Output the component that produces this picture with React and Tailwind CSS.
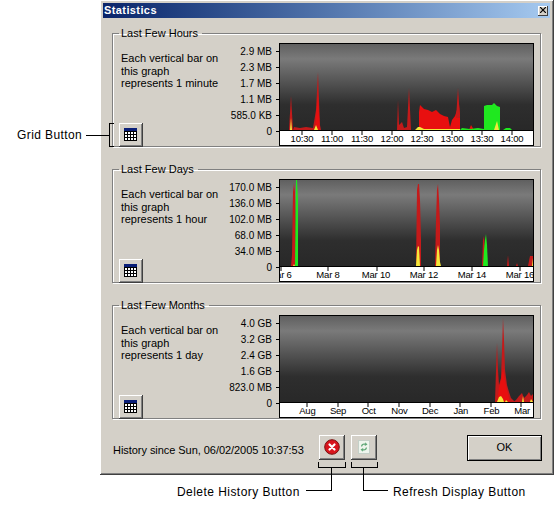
const RED = "#e80f0f";
const DARK = "#c41a1a";
const GREEN = "#1fe81f";
const YEL = "#f4e83a";

function Shapes({ shapes }) {
  return shapes.map(([c, pts], i) => <polygon key={i} fill={c} points={pts} />);
}

function Plot({ id, top, shapes }) {
  return (
    <svg className="block w-[253px] h-[86px]" viewBox={`280 ${top + 1} 253 86`}>
      <defs>
        <linearGradient id={id} x1="0" y1="0" x2="0" y2="1">
          <stop offset="0" stopColor="#5e5e5e" />
          <stop offset="0.18" stopColor="#7a7a7a" />
          <stop offset="0.7" stopColor="#2e2e2e" />
          <stop offset="1" stopColor="#282828" />
        </linearGradient>
      </defs>
      <rect x="280" y={top} width="254" height="88" fill={`url(#${id})`} />
      <Shapes shapes={shapes} />
    </svg>
  );
}

function XAxis({ ticks, labels, cell, offset }) {
  return (
    <div className="relative h-[14px] overflow-hidden bg-white border-t border-black">
      <svg className="absolute left-0 top-0 w-[253px] h-[4px]" viewBox="280 0 253 4">
        {ticks.map((t) => (
          <line key={t} x1={t} x2={t} y1="0" y2="4" stroke="#000" strokeWidth="1" />
        ))}
      </svg>
      <div className="flex pt-[2px] leading-[12px] text-[9.5px] tracking-[-0.2px]" style={{ marginLeft: offset }}>
        {labels.map((l) => (
          <span key={l} className="shrink-0 text-center whitespace-nowrap" style={{ width: cell }}>
            {l}
          </span>
        ))}
      </div>
    </div>
  );
}

function GridIcon() {
  return (
    <svg width="13" height="13" viewBox="0 0 13 13" shapeRendering="crispEdges">
      <rect width="13" height="13" fill="#000" />
      <rect x="0" y="0" width="13" height="3" fill="#0a1f78" />
      {[1, 4, 7, 10].map((x) =>
        [4, 7, 10].map((y) => <rect key={`${x}-${y}`} x={x} y={y} width="2" height="2" fill="#fff" />)
      )}
    </svg>
  );
}

function ToolButton({ children, className = "" }) {
  return (
    <button
      className={`flex items-center justify-center bg-[#d4d0c8] border-r border-b border-[#404040] shadow-[inset_1px_1px_0_#ffffff,inset_-1px_-1px_0_#808080] ${className}`}
    >
      {children}
    </button>
  );
}

function Group({ title, lines, labels, chart, xaxis }) {
  return (
    <fieldset className="h-[120px] border border-[#808080] shadow-[inset_1px_1px_0_#ffffff,1px_1px_0_#ffffff] px-[6px]">
      <legend className="pl-[2px] pr-[4px] leading-[13px]">{title}</legend>
      <div className="flex">
        <div className="flex flex-col w-[110px] h-[107px] shrink-0">
          <div className="ml-[2px] mt-[12px] leading-[12.5px] whitespace-nowrap">
            {lines.map((l) => (
              <div key={l}>{l}</div>
            ))}
          </div>
          <ToolButton className="mt-auto w-[24px] h-[24px]">
            <GridIcon />
          </ToolButton>
        </div>
        <div className="flex mt-[3px]">
          <div className="flex flex-col items-end w-[50px] shrink-0 text-[10px]">
            {labels.map((l) => (
              <div key={l} className="flex items-center justify-end h-[16px]">
                <span className="whitespace-nowrap">{l}</span>
                <span className="ml-[4px] w-[3px] h-px bg-black" />
              </div>
            ))}
          </div>
          <div className="w-[255px] h-[103px] shrink-0 border border-black bg-white">
            {chart}
            {xaxis}
          </div>
        </div>
      </div>
    </fieldset>
  );
}

const chart1 = [
  [DARK, "289,130 291,96 293,130"],
  [DARK, "293,130 294,127 300,128 306,127 313,128 314,122 316,110 318,72 319,100 320,125 321,130"],
  [RED, "315,130 316,116 318,95 319,115 320,130"],
  [YEL, "290,130 291,118 292,130"],
  [YEL, "314,130 316,125 318,130"],
  [DARK, "397,130 398,100 399,125 402,122 404,128 407,127 409,88 411,130"],
  [RED, "419,130 419,112 420,105 424,109 428,110 432,112 436,110 440,114 444,116 448,117 450,127 452,120 455,116 457,110 458,100 459,104 460,115 460,130"],
  [DARK, "456,118 458,88 460,118"],
  [YEL, "415,130 418,127 420,127 424,129 445,129 460,129 460,130"],
  [RED, "469,130 471,125 474,130"],
  [GREEN, "460,130 462,128 470,129 478,128 484,129 484,106 487,105 492,105 494,103 497,106 500,107 500,130"],
  [GREEN, "503,130 506,128 510,128 512,130"],
  [YEL, "494,130 497,121 499,130"],
];

const chart2 = [
  [DARK, "291,266 292,255 293,192 294,183 295,192 296,266"],
  [GREEN, "295,266 296,180 297,179 298,200 298,266"],
  [YEL, "293,266 294,264 295,266"],
  [DARK, "416,266 417,190 418,184 419,184 420,200 421,240 421,266"],
  [YEL, "416,266 417,250 418,246 419,247 420,266"],
  [DARK, "435,266 436,220 437,190 438,184 439,200 440,225 440,266"],
  [YEL, "436,266 437,250 438,245 439,250 440,262 441,266"],
  [DARK, "482,266 483,240 484,236 485,250 486,266"],
  [GREEN, "483,266 484,250 485,240 486,234 487,245 488,266"],
  [DARK, "507,266 508,255 509,266"],
  [DARK, "516,266 517,263 518,266"],
  [DARK, "528,266 530,256 533,256 533,266"],
  [YEL, "532,266 533,258 533,266"],
];

const chart3 = [
  [DARK, "495,402 496,370 497,343 498,370 499,385 501,378 502,350 503,318 504,340 505,370 507,385 509,392 511,398 515,402"],
  [RED, "497,402 499,388 501,380 503,368 505,380 507,390 510,402"],
  [YEL, "497,402 499,397 501,396 503,399 504,402"],
  [YEL, "505,402 506,400 508,402"],
  [DARK, "513,402 516,400 519,396 522,393 524,398 527,395 529,392 531,396 533,394 533,402"],
  [YEL, "522,402 523,396 524,402"],
  [YEL, "530,402 531,399 533,402"],
];

export default function App() {
  return (
    <div className="relative w-[555px] h-[524px] bg-white text-[11px] text-black overflow-hidden font-['Liberation_Sans',Arial,sans-serif]">
      <div className="flex">
        <div className="w-[100px] shrink-0 pt-[127px] pl-[17px] text-[12px] tracking-[0.4px] leading-[16px] whitespace-nowrap">
          Grid Button
        </div>
        <div className="w-[454px] h-[475px] bg-[#d4d0c8] border-r border-b border-[#404040] shadow-[inset_1px_1px_0_#ffffff,inset_-1px_-1px_0_#808080] pl-[3px] pr-[3px] pt-[3px]">
          <div className="h-[15px] flex items-center justify-between bg-gradient-to-r from-[#0a246a] to-[#a6caf0] pl-[1px] pr-[2px]">
            <span className="text-white font-bold tracking-[0.4px] leading-[15px]">Statistics</span>
            <span className="w-[10px] h-[10px] flex items-center justify-center bg-[#d4d0c8] border-r border-b border-[#404040] shadow-[inset_1px_1px_0_#ffffff]">
              <svg width="6" height="6" viewBox="0 0 6 6">
                <path d="M0 0L6 6M6 0L0 6" stroke="#000" strokeWidth="1.2" />
              </svg>
            </span>
          </div>
          <div className="ml-[9px] mr-[9px] mt-[9px] flex flex-col gap-[16px]">
            <Group
              title="Last Few Hours"
              lines={["Each vertical bar on", "this graph", "represents 1 minute"]}
              labels={["2.9 MB", "2.3 MB", "1.7 MB", "1.1 MB", "585.0 KB", "0"]}
              chart={<Plot id="g1" top={43} shapes={chart1} />}
              xaxis={
                <XAxis
                  ticks={[302, 332, 362, 392, 422, 452, 482, 512]}
                  labels={["10:30", "11:00", "11:30", "12:00", "12:30", "13:00", "13:30", "14:00"]}
                  cell="30px"
                  offset="7px"
                />
              }
            />
            <Group
              title="Last Few Days"
              lines={["Each vertical bar on", "this graph", "represents 1 hour"]}
              labels={["170.0 MB", "136.0 MB", "102.0 MB", "68.0 MB", "34.0 MB", "0"]}
              chart={<Plot id="g2" top={179} shapes={chart2} />}
              xaxis={
                <XAxis
                  ticks={[281, 328, 377, 424, 472, 520]}
                  labels={["Mar 6", "Mar 8", "Mar 10", "Mar 12", "Mar 14", "Mar 16"]}
                  cell="48px"
                  offset="-24px"
                />
              }
            />
            <Group
              title="Last Few Months"
              lines={["Each vertical bar on", "this graph", "represents 1 day"]}
              labels={["4.0 GB", "3.2 GB", "2.4 GB", "1.6 GB", "823.0 MB", "0"]}
              chart={<Plot id="g3" top={315} shapes={chart3} />}
              xaxis={
                <XAxis
                  ticks={[307, 338, 368, 399, 430, 460, 491, 521]}
                  labels={["Aug", "Sep", "Oct", "Nov", "Dec", "Jan", "Feb", "Mar"]}
                  cell="30.7px"
                  offset="12px"
                />
              }
            />
          </div>
          <div className="flex items-start ml-[10px] mr-[8px] mt-[16px]">
            <span className="w-[206px] pt-[9px] leading-[13px] tracking-[-0.05px] whitespace-nowrap">History since Sun, 06/02/2005 10:37:53</span>
            <ToolButton className="w-[26px] h-[25px]">
              <svg width="16" height="16" viewBox="0 0 16 16">
                <circle cx="8" cy="8" r="7.3" fill="#d8141c" stroke="#7a1010" strokeWidth="1" />
                <path d="M5.5 5.5L10.5 10.5M10.5 5.5L5.5 10.5" stroke="#fff" strokeWidth="2.2" strokeLinecap="round" />
              </svg>
            </ToolButton>
            <ToolButton className="w-[26px] h-[25px] ml-[6px]">
              <svg width="12" height="14" viewBox="0 0 12 14">
                <rect x="0.5" y="0.5" width="11" height="13" fill="#eef5ee" stroke="#c4d0c8" />
                <path d="M3 6.5C3 4.2 5 3 7.2 3.6V2.2L9.5 4.5L6.8 5.9V4.8C5.6 4.5 4.4 5.2 4.2 6.5Z" fill="#5fa878" />
                <path d="M9 7.5C9 9.8 7 11 4.8 10.4V11.8L2.5 9.5L5.2 8.1V9.2C6.4 9.5 7.6 8.8 7.8 7.5Z" fill="#5fa878" />
              </svg>
            </ToolButton>
            <button className="ml-auto w-[75px] h-[26px] bg-[#d4d0c8] border border-black shadow-[inset_1px_1px_0_#ffffff,inset_-1px_-1px_0_#808080] leading-[20px] text-[11px] pb-[3px]">
              OK
            </button>
          </div>
        </div>
      </div>
      <div className="flex mt-[9px] text-[12px] tracking-[0.45px] leading-[16px] whitespace-nowrap">
        <span className="ml-[177px] w-[216px]">Delete History Button</span>
        <span>Refresh Display Button</span>
      </div>

      <svg className="absolute left-0 top-0 w-[555px] h-[524px] pointer-events-none" viewBox="0 0 555 524" fill="none" stroke="#000" strokeWidth="1" shapeRendering="crispEdges">
        <path d="M86 135.5H109.5M114 123.5H109.5V146.5H114" />
        <path d="M318.5 462V467.5H345.5V462M331.5 467.5V490.5H306" />
        <path d="M351.5 462V467.5H377.5V462M363.5 467.5V490.5H388" />
      </svg>
    </div>
  );
}
